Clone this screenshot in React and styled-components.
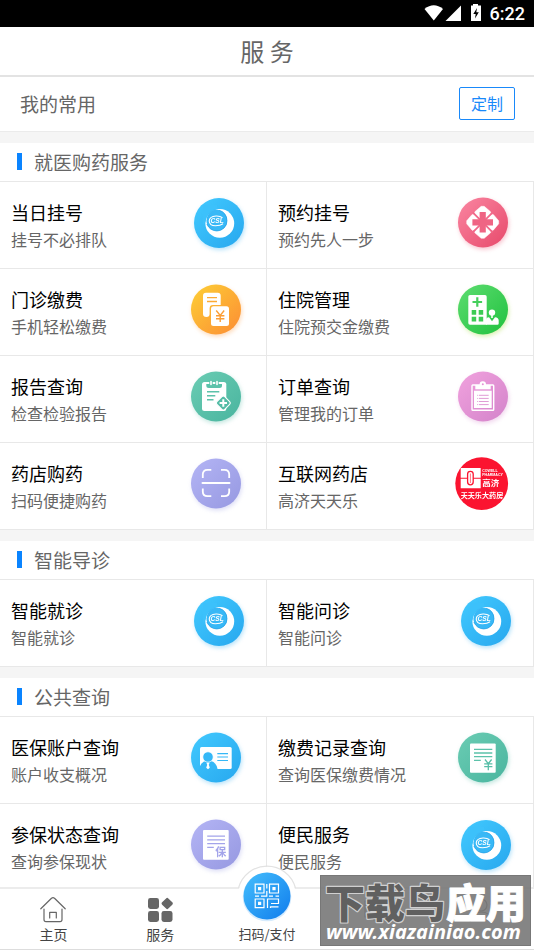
import React from 'react';
import styled, { createGlobalStyle } from 'styled-components';

const GlobalStyle = createGlobalStyle`
  * {
    box-sizing: border-box;
  }

  body {
    margin: 0;
    background: #fff;
    font-family: "Noto Sans CJK SC", sans-serif;
    color: #666;
  }

  button {
    margin: 0;
    padding: 0;
    border: 0;
    background: none;
    font-family: inherit;
    color: inherit;
    cursor: pointer;
  }
`;

const Screen = styled.div`
  position: relative;
  display: flex;
  flex-direction: column;
  height: 100vh;
  overflow: hidden;
`;

const StatusBar = styled.div`
  display: flex;
  flex: none;
  align-items: center;
  justify-content: flex-end;
  height: 27px;
  padding-right: 9px;
  background: #000;
  color: #fff;
  font: 500 18px/27px Roboto, sans-serif;
`;

const StatusIcons = styled.svg`
  width: 60px;
  height: 27px;
  margin-right: 6px;
`;

const TitleBar = styled.header`
  flex: none;
  border-bottom: 2px solid #e3e3e3;
  text-align: center;

  h1 {
    margin: 0;
    font-size: 24px;
    font-weight: 400;
    line-height: 48px;
  }
`;

const Content = styled.main`
  flex: 1;
  min-height: 0;
  overflow-y: auto;
  scrollbar-width: none;
`;

const Favorites = styled.div`
  display: flex;
  align-items: center;
  justify-content: space-between;
  height: 55px;
  padding: 0 19px 2px 20px;
  border-bottom: 1px solid #ebebeb;
  font-size: 19px;
`;

const CustomizeButton = styled.button`
  width: 56px;
  height: 33px;
  border: 1px solid #1989fa;
  border-radius: 2px;
  color: #1989fa;
  font-size: 16px;
`;

const Section = styled.section`
  border-top: 11px solid #f5f5f5;
`;

const SectionTitle = styled.h2`
  display: flex;
  align-items: center;
  gap: 12px;
  height: 39px;
  margin: 0;
  padding: 0 0 2px 17px;
  border-bottom: 1px solid #e8e8e8;
  font-size: 19px;
  font-weight: 400;

  &:before {
    content: '';
    width: 5px;
    height: 17px;
    background: #0a84ff;
  }
`;

const Grid = styled.div`
  display: grid;
  grid-template-columns: 1fr 1fr;
`;

const Cell = styled.button`
  display: flex;
  align-items: flex-start;
  justify-content: space-between;
  height: 87px;
  padding: 11px 20px 0 11px;
  border-right: 1px solid #e8e8e8;
  border-bottom: 1px solid #e8e8e8;
  text-align: left;
`;

const CellText = styled.span`
  display: flex;
  flex-direction: column;
  padding-top: 6px;
  line-height: 27px;
  white-space: nowrap;
`;

const CellName = styled.span`
  color: #000;
  font-size: 18px;
`;

const CellHint = styled.span`
  font-size: 16px;
`;

const IconSvg = styled.svg`
  flex: none;
  width: 60px;
  height: 60px;
  overflow: visible;
  filter: drop-shadow(1px 2px 2px ${(props) => props.$glow});
`;

const TabBar = styled.nav`
  position: relative;
  display: grid;
  flex: none;
  grid-template-columns: repeat(5, 1fr);
  height: 63px;
  border-top: 2px solid #ececec;
  border-bottom: 1px solid #ddd;
  background: #fff;
`;

const Tab = styled.button`
  position: relative;
  display: flex;
  flex-direction: column;
  align-items: center;
  gap: 1px;
  padding-top: 8px;
  color: #444;
  font-size: ${(props) => (props.$small ? '13px' : '14px')};
  line-height: 20px;
  white-space: nowrap;
`;

const TabIcon = styled.svg`
  width: 26px;
  height: 26px;
`;

const ScanSlot = styled.span`
  display: flex;
  justify-content: center;
  width: 26px;
  height: 26px;
`;

const ScanBadge = styled.svg`
  position: absolute;
  top: -23px;
  width: 60px;
  height: 60px;
  overflow: visible;
`;

const Watermark = styled.div`
  position: absolute;
  right: 3px;
  bottom: 4px;
  width: 211px;
  height: 71px;
  background: rgba(120, 120, 120, 0.9);
  border: 1px solid #777;
  color: #fff;
`;

const WatermarkArt = styled.svg`
  display: block;
  width: 100%;
  height: 100%;
`;

const Disc = ({ id, from, to, glow, cx = 30, cy = 29.5, children }) => (
  <IconSvg viewBox="0 0 60 60" $glow={glow} aria-hidden="true">
    <defs>
      <linearGradient id={id} x1="0" y1="0" x2="1" y2="1">
        <stop offset="0.1" stopColor={from} />
        <stop offset="0.9" stopColor={to} />
      </linearGradient>
    </defs>
    <circle cx={cx} cy={cy} r="25" fill={`url(#${id})`} />
    {children}
  </IconSvg>
);

const CslIcon = ({ id }) => (
  <Disc id={id} from="#3fc6fd" to="#2aabf0" glow="#2aabf055" cx={33} cy={30}>
    <circle cx="33.8" cy="30.4" r="14.4" fill="#fff" />
    <path d="M17 32L19.6 28.5Q21 18 31.5 15.6L31 12H17Z" fill="#3cc1fb" />
    <circle cx="30.8" cy="27.8" r="10.3" fill="#38b8f6" />
    <path d="M29 16.2Q40.8 17.5 41 27.8A10.2 10.2 0 0 1 30.8 38Q23 37.5 20.7 30Q20 19 29 16.2Z" fill="#38b8f6" />
    <path d="M33 17.2Q40.8 19.5 41 27.8A10.2 10.2 0 0 1 30.8 38Q23.5 37.5 20.8 31" fill="none" stroke="#1c9be4" strokeWidth="0.9" opacity="0.7" />
    <path d="M36.5 24.8Q34 22.8 30 23Q23.4 23.5 23.2 28Q23.5 32.6 29.5 32.8Q34.5 32.8 37 30.8" fill="none" stroke="#fff" strokeWidth="1.1" />
    <text x="24.6" y="30.4" fill="#fff" fontFamily="Liberation Sans, sans-serif" fontSize="6.6" fontWeight="700" fontStyle="italic">
      CSL
    </text>
  </Disc>
);

const BillIcon = () => (
  <Disc id="bill" from="#fdc935" to="#fc9334" glow="#fc933455">
    <path d="M20 12.7H31.7Q34.7 12.7 34.7 15.7V25H27Q23.6 25 23.6 28.4V34Q23.6 37 20.5 37Q17 37 17 34V15.7Q17 12.7 20 12.7Z" fill="#fff" />
    <path d="M21 17.7H31M21 21.5H31" stroke="#fcaa35" strokeWidth="1.3" />
    <rect x="25" y="26.3" width="18" height="19.7" rx="2.5" fill="#fff" />
    <path d="M30.2 30.5L34.2 35.5L38.2 30.5M34.2 35.5V42M30 35.8H38.4M30 38.8H38.4" fill="none" stroke="#fc9e35" strokeWidth="1.4" />
  </Disc>
);

const PETAL = 'M-1.5 -16H1.5L7.6 -10.8Q8.6 -9.9 7.8 -8.8L7 -7L0 -0.8L-7 -7L-7.8 -8.8Q-8.6 -9.9 -7.6 -10.8Z';

const FlowerIcon = () => (
  <Disc id="flower" from="#f8809c" to="#e94f70" glow="#e94f7055">
    <g transform="translate(29.7 29.3)">
      {[0, 90, 180, 270].map((angle) => (
        <path key={angle} d={PETAL} fill="#fff" stroke="#fff" strokeWidth="0.5" strokeLinejoin="round" transform={`rotate(${angle})`} />
      ))}
      <path d="M-10 -10L10 10M10 -10L-10 10" stroke="#f1698a" strokeWidth="1.8" />
      <path d="M0 -10.3V10.3M-10.3 0H10.3" stroke="#ef6584" strokeWidth="6.2" />
    </g>
  </Disc>
);

const HospitalIcon = () => (
  <Disc id="hospital" from="#57da6c" to="#27c443" glow="#a5dc3f66">
    <path d="M17 15H32Q33.7 15 33.7 16.7V44.7H17Q15.3 44.7 15.3 43V16.7Q15.3 15 17 15Z" fill="#fff" />
    <path d="M24.3 17.2V26.8M19.5 22H29.1" stroke="#45cf5c" strokeWidth="2.2" />
    <path d="M18.7 30H23.2V34.7H18.7ZM25.7 30H30.2V34.7H25.7ZM18.7 36.8H23.2V41.5H18.7ZM25.7 36.8H30.2V41.5H25.7Z" fill="#3ccb54" />
    <circle cx="39" cy="32.6" r="3.2" fill="#fff" />
    <path d="M38.2 35H39.8V38H38.2Z" fill="#fff" />
    <path d="M33 44.7V40Q33 37.5 36 37.2L39 41.2L42 37.2Q45.7 37.5 45.7 40.5V43.5Q45.7 44.7 44.5 44.7Z" fill="#fff" />
  </Disc>
);

const ReportIcon = () => (
  <Disc id="report" from="#67cab1" to="#4db7a1" glow="#4db7a155">
    <rect x="16" y="15" width="24.3" height="29" rx="2.5" fill="#fff" />
    <path d="M20.3 17H36V18.5Q36 21 33.5 21H22.8Q20.3 21 20.3 18.5Z" fill="#5cc2aa" />
    <path d="M25 13V18M31 13V18" stroke="#5cc2aa" strokeWidth="3.4" />
    <path d="M25 14.5V17.5M31 14.5V17.5" stroke="#fff" strokeWidth="1.6" strokeLinecap="round" />
    <path d="M21 24.8H33.3M21 28.7H29.3M21 32.7H27.5" stroke="#5cc2aa" strokeWidth="1.4" />
    <rect x="31.8" y="30.5" width="11" height="11" rx="2" fill="#55bca6" stroke="#fff" strokeWidth="1.1" transform="rotate(45 37.3 36)" />
    <path d="M37.3 32.3V39.7M33.6 36H41" stroke="#fff" strokeWidth="2" />
  </Disc>
);

const ScanIcon = () => (
  <Disc id="scan" from="#b1b2f3" to="#999be3" glow="#999be355">
    <path
      d="M25.3 15.8H21.5Q16.8 15.8 16.8 20.5V24M35 15.8H38.5Q43.2 15.8 43.2 20.5V24M16.8 34.5V37.5Q16.8 42.2 21.5 42.2H25.3M43.2 34.5V37.5Q43.2 42.2 38.5 42.2H35"
      fill="none"
      stroke="#fff"
      strokeWidth="1.8"
    />
    <path d="M16.5 29H43.5" stroke="#fff" strokeWidth="2" strokeLinecap="round" />
  </Disc>
);

const OrderIcon = () => (
  <Disc id="order" from="#ee9fdc" to="#d686cc" glow="#d686cc55">
    <rect x="19" y="18" width="21.7" height="25.3" rx="0.8" fill="none" stroke="#fff" strokeWidth="1.4" />
    <path d="M22.3 18H37.7V22.3H22.3Z" fill="#fff" />
    <circle cx="29.8" cy="17.5" r="3.2" fill="#fff" />
    <circle cx="29.8" cy="17.2" r="1" fill="#e494d5" />
    <path d="M21 23.7H38.7V41H21Z" fill="#fff" />
    <path d="M24.2 28.3H25.2M26 28.3H35.7M24.2 31.4H25.2M26 31.4H35.7M24.2 34.5H25.2M26 34.5H35.7M24.2 37.6H25.2M26 37.6H35.7" stroke="#e09cd5" strokeWidth="1" />
  </Disc>
);

const CowellIcon = () => (
  <IconSvg viewBox="0 0 60 60" $glow="transparent" aria-hidden="true">
    <circle cx="28.7" cy="29.6" r="26.4" fill="#fb1430" />
    <path d="M7.7 14H27.7V23.8H7.7ZM7.7 24.8H27.7V34.2H7.7Z" fill="#fff" />
    <rect x="14.6" y="17.3" width="5.6" height="13.6" rx="2.8" fill="#fff" stroke="#fb1430" strokeWidth="1.3" />
    <path d="M17.4 19.5V29" stroke="#fb1430" strokeWidth="0.6" />
    <g fill="#fff" fontWeight="700">
      <text x="29.2" y="18.2" fontFamily="Liberation Sans, sans-serif" fontSize="3.6">COWELL</text>
      <text x="29.2" y="21.8" fontFamily="Liberation Sans, sans-serif" fontSize="3.6">PHARMACY</text>
      <text x="29.2" y="32.4" fontSize="8.5">高济</text>
      <text x="7.7" y="44.4" fontSize="7.1">天天乐大药房</text>
    </g>
  </IconSvg>
);

const AccountIcon = () => (
  <Disc id="account" from="#3fc6fd" to="#2aabf0" glow="#2aabf055">
    <rect x="14" y="19" width="31.7" height="22" rx="1.6" fill="#fff" />
    <path d="M13 41.5Q14.5 33.8 20 33H24.5Q30.5 34 31.7 41.5Z" fill="#35b8f7" />
    <circle cx="22" cy="29" r="5.2" fill="#35b8f7" stroke="#fff" strokeWidth="0.7" />
    <path d="M20.4 34.7H23.6L22.8 36.8L23.8 39.8L22 41.3L20.2 39.8L21.2 36.8Z" fill="#fff" />
    <path d="M31.3 25.6H42M31.3 29H42M31.3 32.5H42" stroke="#35b8f7" strokeWidth="1.2" />
  </Disc>
);

const InsuredIcon = () => (
  <Disc id="insured" from="#b1b2f3" to="#999be3" glow="#999be355">
    <rect x="17" y="15" width="25.7" height="29.7" rx="1" fill="#fff" />
    <path d="M21.2 21.2H39M21.2 24.8H39M21.2 28.6H39M21.2 32.3H27.8" stroke="#a3a4ea" strokeWidth="1.3" />
    <text x="29.2" y="41.4" fill="#a3a4ea" fontSize="11" fontWeight="700">保</text>
  </Disc>
);

const RecordIcon = () => (
  <Disc id="record" from="#67cab1" to="#4db7a1" glow="#4db7a155">
    <rect x="17" y="15.4" width="25.7" height="29.3" rx="1" fill="#fff" />
    <path d="M21 21.3H39.3M21 25H39.3M21 28.6H39.3M21 32.4H27.8" stroke="#5cc2aa" strokeWidth="1.3" />
    <path d="M32 31.5L35.3 35.6L38.6 31.5M35.3 35.6V42.3M31.2 35.8H39.4M31.2 38.6H39.4" fill="none" stroke="#57bea7" strokeWidth="1.3" />
  </Disc>
);

const sections = [
  {
    title: '就医购药服务',
    items: [
      { name: '当日挂号', hint: '挂号不必排队', icon: <CslIcon id="csl-today" /> },
      { name: '预约挂号', hint: '预约先人一步', icon: <FlowerIcon /> },
      { name: '门诊缴费', hint: '手机轻松缴费', icon: <BillIcon /> },
      { name: '住院管理', hint: '住院预交金缴费', icon: <HospitalIcon /> },
      { name: '报告查询', hint: '检查检验报告', icon: <ReportIcon /> },
      { name: '订单查询', hint: '管理我的订单', icon: <OrderIcon /> },
      { name: '药店购药', hint: '扫码便捷购药', icon: <ScanIcon /> },
      { name: '互联网药店', hint: '高济天天乐', icon: <CowellIcon /> },
    ],
  },
  {
    title: '智能导诊',
    items: [
      { name: '智能就诊', hint: '智能就诊', icon: <CslIcon id="csl-visit" /> },
      { name: '智能问诊', hint: '智能问诊', icon: <CslIcon id="csl-ask" /> },
    ],
  },
  {
    title: '公共查询',
    items: [
      { name: '医保账户查询', hint: '账户收支概况', icon: <AccountIcon /> },
      { name: '缴费记录查询', hint: '查询医保缴费情况', icon: <RecordIcon /> },
      { name: '参保状态查询', hint: '查询参保现状', icon: <InsuredIcon /> },
      { name: '便民服务', hint: '便民服务', icon: <CslIcon id="csl-public" /> },
    ],
  },
];

const App = () => {
  return (
    <Screen>
      <GlobalStyle />
      <StatusBar>
        <StatusIcons viewBox="0 0 60 27" fill="#fff" aria-hidden="true">
          <path d="M0.5 9Q9.8 1.5 19 9L9.8 20.5Z" />
          <path d="M37 5.5V21H21.5Z" />
          <path d="M49 4H54V5.5H57V21H47V5.5H49Z" />
          <path d="M53 8L49.3 14H51.7L51 18.5L54.8 12.3H52.3Z" fill="#000" />
        </StatusIcons>
        <span>6:22</span>
      </StatusBar>
      <TitleBar>
        <h1>服 务</h1>
      </TitleBar>
      <Content>
        <Favorites>
          <span>我的常用</span>
          <CustomizeButton>定制</CustomizeButton>
        </Favorites>
        {sections.map((section) => (
          <Section key={section.title}>
            <SectionTitle>{section.title}</SectionTitle>
            <Grid>
              {section.items.map((item) => (
                <Cell key={item.name}>
                  <CellText>
                    <CellName>{item.name}</CellName>
                    <CellHint>{item.hint}</CellHint>
                  </CellText>
                  {item.icon}
                </Cell>
              ))}
            </Grid>
          </Section>
        ))}
      </Content>
      <TabBar>
        <Tab>
          <TabIcon viewBox="0 0 26 26" fill="none" stroke="#666" strokeWidth="1.2" strokeLinecap="round" strokeLinejoin="round">
            <path d="M0.8 11.8L11.5 1.2Q13 0.2 14.5 1.2L25.2 11.8M4 12V22.5Q4 24.6 6 24.6H20Q22 24.6 22 22.5V12M9.7 21V15.3H16.3V21" />
          </TabIcon>
          主页
        </Tab>
        <Tab>
          <TabIcon viewBox="0 0 26 26" fill="#666">
            <rect x="1" y="1" width="11" height="11" rx="2.4" />
            <rect x="1" y="14" width="11" height="11" rx="2.4" />
            <rect x="14.5" y="14" width="11" height="11" rx="2.4" />
            <rect x="15.8" y="2.1" width="8.8" height="8.8" rx="1.6" transform="rotate(45 20.2 6.5)" />
          </TabIcon>
          服务
        </Tab>
        <Tab $small>
          <ScanSlot>
            <ScanBadge viewBox="0 0 60 60" aria-hidden="true">
              <defs>
                <linearGradient id="badge" x1="0" y1="0" x2="1" y2="1">
                  <stop offset="0.1" stopColor="#40b8fb" />
                  <stop offset="0.9" stopColor="#1583ee" />
                </linearGradient>
              </defs>
              <circle cx="30" cy="30" r="29" fill="#fff" />
              <path d="M1.5 22A29.5 29.5 0 0 1 58.5 22" fill="none" stroke="#e2e2e2" strokeWidth="1.2" />
              <circle cx="30" cy="31" r="24.3" fill="#d6ebfd" />
              <circle cx="30" cy="30" r="23.5" fill="url(#badge)" />
              <g fill="none" stroke="#fff" strokeWidth="1.2">
                <path d="M18.2 18.2H27V27H18.2ZM32.5 18.2H41.5V27H32.5ZM18.2 33H27V41.6H18.2Z" />
                <path d="M29.8 18V22.5M29.8 25V30.2H24M18 30.2H22M32 30.2H36M38.5 30.2H42M30.5 42V33H41.5V37.5H34M33.5 42V40.8H41.5" />
              </g>
              <path d="M21 21H24.2V24.2H21ZM35.4 21H38.6V24.2H35.4ZM21 35.7H24.2V38.9H21Z" fill="#fff" />
            </ScanBadge>
          </ScanSlot>
          扫码/支付
        </Tab>
        <Tab aria-label="咨询">
          <TabIcon viewBox="0 0 26 26" fill="none" stroke="#666" strokeWidth="1.2">
            <path d="M4 4H22V20H15L13 23L11 20H4ZM8 9H18M8 14H18" />
          </TabIcon>
        </Tab>
        <Tab aria-label="我的">
          <TabIcon viewBox="0 0 26 26" fill="none" stroke="#666" strokeWidth="1.2">
            <circle cx="13" cy="8" r="6" />
            <path d="M2 25Q3 15 13 15Q23 15 24 25" />
          </TabIcon>
        </Tab>
      </TabBar>
      <Watermark>
        <WatermarkArt viewBox="0 0 209 69">
          <g fontSize="40" fontWeight="900" strokeLinejoin="round">
            <text x="4" y="42" fill="#606060" stroke="#d0d0d0" strokeWidth="2.4" paintOrder="stroke">
              下载鸟
            </text>
            <text x="125" y="42" fill="#fff" stroke="#fff" strokeWidth="1">
              应用
            </text>
          </g>
          <text x="5" y="63" fill="#fff" fontFamily="Noto Sans, sans-serif" fontSize="20" fontWeight="700" fontStyle="italic">
            www.xiazainiao.com
          </text>
        </WatermarkArt>
      </Watermark>
    </Screen>
  );
};

export default App;
